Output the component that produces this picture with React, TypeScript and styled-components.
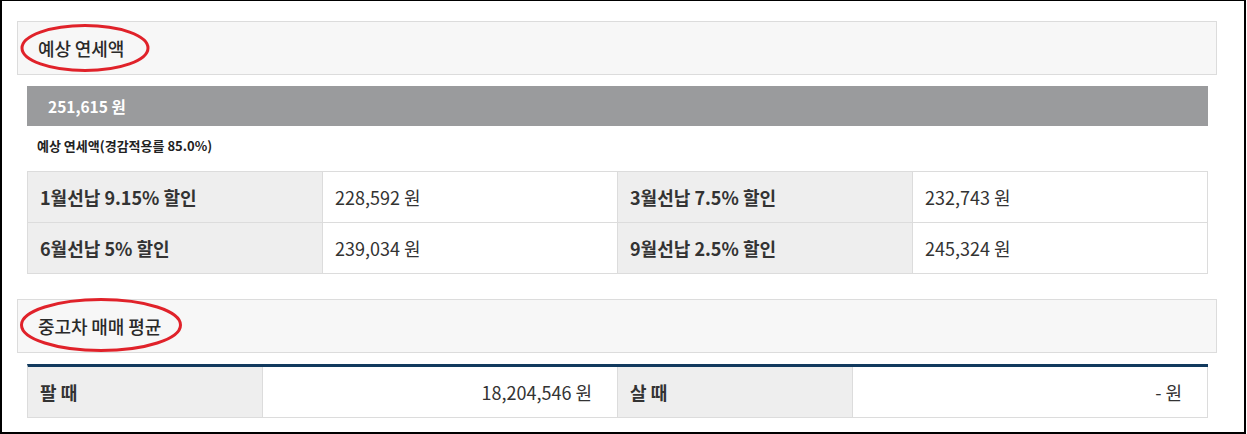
import React from 'react';
import styled, { createGlobalStyle } from 'styled-components';

const GlobalStyle = createGlobalStyle`
  html, body {
    margin: 0;
    padding: 0;
    background: #fff;
  }
  body {
    font-family: "Noto Sans CJK KR", "Noto Sans", sans-serif;
    color: #333;
  }
`;

// 바깥 프레임
const Frame = styled.div`
  box-sizing: border-box;
  width: 1246px;
  height: 434px;
  border-top: 1px solid #000;
  border-left: 2px solid #000;
  border-right: 2px solid #000;
  border-bottom: 2px solid #000;
  padding: 20px 26px 0 15px;
  display: flex;
  flex-direction: column;
`;

const SectionHeader = styled.div<{ mt?: number }>`
  position: relative;
  box-sizing: border-box;
  width: 1200px;
  height: 54px;
  margin-top: ${p => p.mt ?? 0}px;
  background: #f7f7f7;
  border: 1px solid #dcdcdc;
  display: flex;
  align-items: center;
  padding-left: 20px;
`;

const HeaderTitle = styled.h3`
  margin: 0;
  font-size: 18px;
  font-weight: 500;
  color: #2a2a2a;
  letter-spacing: -0.1px;
`;

// 빨간 타원 표시 (주석)
const Mark = styled.svg`
  position: absolute;
  pointer-events: none;
  overflow: visible;
`;

const Body = styled.div`
  padding: 0 10px;
`;

const TotalBar = styled.div`
  margin-top: 11px;
  height: 40px;
  background: #9a9b9d;
  color: #fff;
  font-size: 15.5px;
  font-weight: 700;
  display: flex;
  align-items: center;
  padding-left: 21px;
`;

const Note = styled.p`
  margin: 11px 0 0 10px;
  font-size: 13px;
  font-weight: 700;
  color: #222;
  line-height: 18px;
`;

const Table = styled.div<{ cols: string; topLine?: boolean }>`
  display: grid;
  grid-template-columns: ${p => p.cols};
  border-top: ${p => (p.topLine ? '3px solid #123a5e' : '1px solid #dcdcdc')};
  border-left: 1px solid #dcdcdc;
`;

const Cell = styled.div<{ head?: boolean; right?: boolean }>`
  box-sizing: border-box;
  height: 51px;
  display: flex;
  align-items: center;
  justify-content: ${p => (p.right ? 'flex-end' : 'flex-start')};
  padding: ${p => (p.right ? '0 25px 0 12px' : '0 12px')};
  background: ${p => (p.head ? '#eeeeee' : '#fff')};
  font-size: 18px;
  font-weight: ${p => (p.head ? 700 : 400)};
  color: #333;
  border-right: 1px solid #dcdcdc;
  border-bottom: 1px solid #dcdcdc;
`;

const prepay = [
  { label: '1월선납 9.15% 할인', value: '228,592 원' },
  { label: '3월선납 7.5% 할인', value: '232,743 원' },
  { label: '6월선납 5% 할인', value: '239,034 원' },
  { label: '9월선납 2.5% 할인', value: '245,324 원' },
];

const App: React.FC = () => {
  return (
    <>
      <GlobalStyle />
      <Frame>
        <SectionHeader>
          <HeaderTitle>예상 연세액</HeaderTitle>
          <Mark width="130" height="48" style={{ left: 2, top: 2 }}>
            <ellipse cx="65" cy="24" rx="63" ry="22.5" fill="none" stroke="#e0222a" strokeWidth="3" />
          </Mark>
        </SectionHeader>
        <Body>
          <TotalBar>251,615 원</TotalBar>
          <Note>예상 연세액(경감적용를 85.0%)</Note>
          <Table cols="295px 295px 295px 295px" style={{ marginTop: 16 }}>
            {prepay.map(item => (
              <React.Fragment key={item.label}>
                <Cell head>{item.label}</Cell>
                <Cell>{item.value}</Cell>
              </React.Fragment>
            ))}
          </Table>
        </Body>
        <SectionHeader mt={25}>
          <HeaderTitle>중고차 매매 평균</HeaderTitle>
          <Mark width="162" height="54" style={{ left: 2, top: -2 }}>
            <ellipse cx="81" cy="27" rx="79.5" ry="25.5" fill="none" stroke="#e0222a" strokeWidth="3" />
          </Mark>
        </SectionHeader>
        <Body>
          <Table cols="235px 355px 235px 355px" topLine style={{ marginTop: 11 }}>
            <Cell head>팔 때</Cell>
            <Cell right>18,204,546 원</Cell>
            <Cell head>살 때</Cell>
            <Cell right>- 원</Cell>
          </Table>
        </Body>
      </Frame>
    </>
  );
};

export default App;
